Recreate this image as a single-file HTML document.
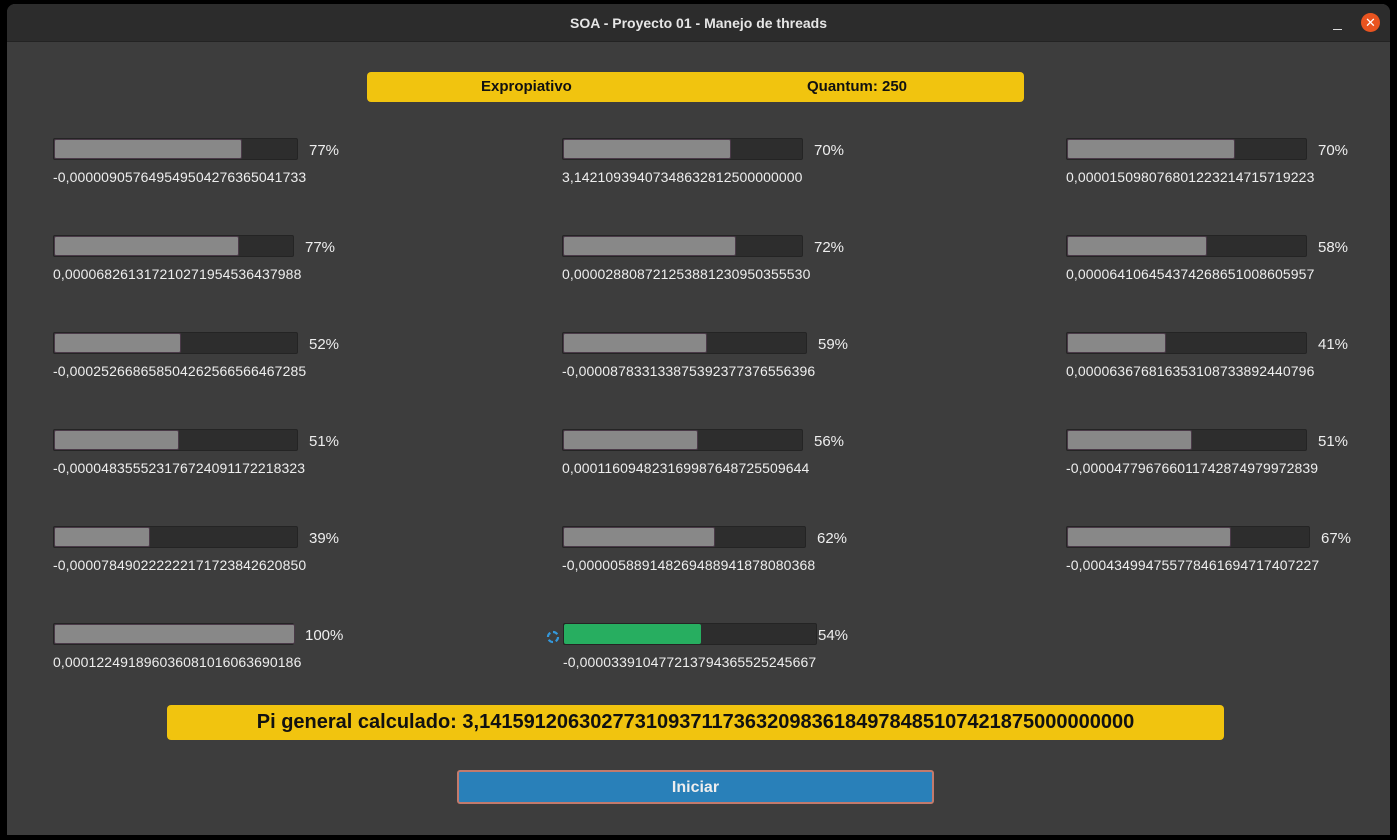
<!DOCTYPE html>
<html><head><meta charset="utf-8"><style>
body{margin:0;width:1397px;height:840px;background:#000;position:relative;overflow:hidden;font-family:"Liberation Sans","DejaVu Sans",sans-serif;}
.win{position:absolute;left:7px;top:4px;width:1383px;height:831px;background:#3d3d3d;border-radius:8px 8px 0 0;overflow:hidden}
.tb{position:absolute;left:0;top:0;width:100%;height:37px;background:#2c2c2c;border-bottom:1px solid #232323;color:#e6e6e6;font-weight:bold;font-size:14px;text-align:center;line-height:38px}
.min{position:absolute;left:1326px;top:25px;width:9px;height:1px;background:#ddd}
.cls{position:absolute;left:1354px;top:9px;width:19px;height:19px;border-radius:50%;background:#e95420;color:#fff;font-size:13px;line-height:19px;text-align:center}
.bar{position:absolute;height:22px;background:#2d2d2d;border:1px solid #242424;border-radius:2px;box-sizing:border-box}
.fill{position:absolute;left:0;top:0;height:100%;background:#888;border:1px solid #4a3a48;box-sizing:border-box;border-radius:2px}
.pct{position:absolute;color:#eee;font-size:15px}
.val{position:absolute;color:#eee;font-size:14px;letter-spacing:0.1px}
.y{position:absolute;background:#f1c40f;border-radius:4px;color:#111;font-weight:bold}
</style></head><body>
<div class="win">
<div class="tb">SOA - Proyecto 01 - Manejo de threads</div>
<div class="min"></div><div class="cls">✕</div>
</div>
<div class="y" style="left:367px;top:72px;width:657px;height:30px;font-size:15px;line-height:30px"><span style="position:absolute;left:114px">Expropiativo</span><span style="position:absolute;left:440px">Quantum: 250</span></div>

<div id="items"></div>

<div class="y" style="left:167px;top:705px;width:1057px;height:35px;font-size:20px;line-height:35px;text-align:center">Pi general calculado: 3,14159120630277310937117363209836184978485107421875000000000</div>
<div style="position:absolute;left:457px;top:770px;width:477px;height:34px;box-sizing:border-box;background:#2980b9;border:2px solid #c27a6c;border-radius:3px;color:#eee;font-weight:bold;font-size:16px;text-align:center;line-height:31px">Iniciar</div>
<svg style="position:absolute;left:546px;top:630px" width="14" height="14"><circle cx="7" cy="7" r="5" fill="none" stroke="#3498db" stroke-width="2.2" stroke-dasharray="5 2.8"/></svg>
<script>
var d=[
[53,138,298,241,"77%","-0,00000905764954950427636504173 3"],
[562,138,803,730,"70%","3,14210939407348632812500000000"],
[1066,138,1307,1234,"70%","0,0000150980768012232147157192 23"],
[53,235,294,238,"77%","0,00006826131721027195453643798 8"],
[562,235,803,735,"72%","0,00002880872125388123095035553 0"],
[1066,235,1307,1206,"58%","0,00006410645437426865100860595 7"],
[53,332,298,180,"52%","-0,0002526686585042625665664672 85"],
[562,332,807,706,"59%","-0,0000878331338753923773765563 96"],
[1066,332,1307,1165,"41%","0,00006367681635310873389244079 6"],
[53,429,298,178,"51%","-0,0000483555231767240911722183 23"],
[562,429,803,697,"56%","0,00011609482316998764872550964 4"],
[1066,429,1307,1191,"51%","-0,0000477967660117428749799728 39"],
[53,526,298,149,"39%","-0,0000784902222221717238426208 50"],
[562,526,806,714,"62%","-0,0000058891482694889418780803 68"],
[1066,526,1310,1230,"67%","-0,0004349947557784616947174072 27"],
[53,623,294,294,"100%","0,00012249189603608101606369018 6"],
[563,623,817,700,"54%","-0,0000339104772137943655252456 67"]];
var h="";
d.forEach(function(r,i){var w=r[2]-r[0],f=r[3]-r[0];var g=i==16?"background:#27ae60;border-color:#27ae60;":"";
h+='<div class="bar" style="left:'+r[0]+'px;top:'+r[1]+'px;width:'+w+'px"><div class="fill" style="'+g+'width:'+f+'px"></div></div>';
h+='<div class="pct" style="left:'+(r[2]+(i==16?1:11))+'px;top:'+(r[1]+4)+'px">'+r[4]+'</div>';
h+='<div class="val" style="left:'+r[0]+'px;top:'+(r[1]+31)+'px">'+r[5].replace(" ","")+'</div>';});
document.getElementById("items").innerHTML=h;
</script>
</body></html>
